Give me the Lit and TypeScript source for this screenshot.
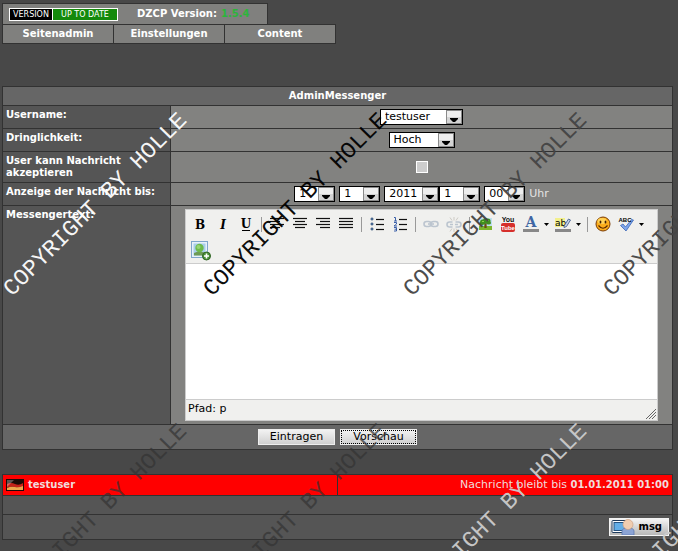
import { LitElement, html, css, svg, nothing } from "lit";
import { customElement, property } from "lit/decorators.js";

const line = (y: number, x1 = 1, x2 = 15) =>
  svg`<path d="M${x1} ${y + 0.5}H${x2}" stroke="#111" stroke-width="1.2"/>`;

const ICONS: Record<string, unknown> = {
  bold: svg`<text x="8" y="13" class="serif bold" text-anchor="middle">B</text>`,
  italic: svg`<text x="8" y="13" class="serif bold italic" text-anchor="middle">I</text>`,
  underline: svg`<text x="8" y="12" class="serif bold" text-anchor="middle">U</text><path d="M4 14.5H12" stroke="#000"/>`,
  left: svg`${line(2)}${line(5, 1, 11)}${line(8)}${line(11, 1, 11)}`,
  center: svg`${line(2)}${line(5, 3, 13)}${line(8)}${line(11, 3, 13)}`,
  right: svg`${line(2)}${line(5, 5, 15)}${line(8)}${line(11, 5, 15)}`,
  full: svg`${line(2)}${line(5)}${line(8)}${line(11)}`,
  ul: svg`${line(3, 7)}${line(8, 7)}${line(13, 7)}
    <g fill="#5b83b8" stroke="#26466f" stroke-width=".8"><circle cx="3" cy="3" r="1.1"/><circle cx="3" cy="8" r="1.1"/><circle cx="3" cy="13" r="1.1"/></g>`,
  ol: svg`${line(3, 7)}${line(8, 7)}${line(13, 7)}
    <g fill="none" stroke="#3a5fa8" stroke-width="1"><path d="M2 1.500H3.500V5M2 5H5"/><path d="M2 6.500H4.500V8L2 10H5"/><path d="M2 11.500H4.500V15H2M2.500 13.200H4.500"/></g>`,
  link: svg`<g fill="none" stroke="#bcc5cf" stroke-width="1.6"><rect x="1" y="5.5" width="7" height="5" rx="2.5"/><rect x="8" y="5.5" width="7" height="5" rx="2.5"/><path d="M5 8H11"/></g>`,
  unlink: svg`<g fill="none" stroke="#bcc5cf" stroke-width="1.6"><path d="M6.5 6H3.5a2.2 2.2 0 0 0 0 5H6.5M9.5 6h3a2.2 2.2 0 0 1 0 5h-3M4 8.5H7M9 8.5h3"/></g>
    <path d="M8 1V4.5M4 1.5L6 4.5M12 1.5L10 4.5M8 12.5V16M4 15.5L6 12.5M12 15.5L10 12.5" stroke="#cdcac4"/>`,
  image: svg`<rect x="2" y="2" width="13" height="12" fill="#bfe0f0"/><rect x="2" y="10" width="13" height="4" fill="#7db62d"/>
    <path d="M8 12L8 8 5 6M9 12L9 7 12 5" stroke="#6b4a18" stroke-width="1.3" fill="none"/>
    <path d="M3 6.5Q3 3 6 3.5 8 1 10.500 2.500 14 2.500 13.500 5.500 15 8 12 8.500 10 9 9 7 6 10 4 8.500 2 8.500 3 6.500Z" fill="#3f8f1f"/><path d="M5 5.500h2M9 4.500h3" stroke="#8fd04a"/>`,
  youtube: svg`<text x="8" y="6" class="tube" text-anchor="middle" fill="#111">You</text><rect x="1" y="7" width="14" height="9" rx="2" fill="#d62f2b"/>
    <text x="8" y="14" class="tube small" text-anchor="middle" fill="#fff">Tube</text>`,
  color: svg`<text x="8" y="11" class="serif letter" text-anchor="middle" fill="#3f66a3">A</text><rect x="0" y="13" width="16" height="3" fill="#888"/>`,
  marker: svg`<rect x="0" y="2" width="10" height="9" fill="#f3f08c"/><text x="0" y="10" class="ab">ab</text>
    <path d="M9 10L13.500 3 15.500 4 11.500 10.500 9 11.500Z" fill="#c3d2ea" stroke="#47618c" stroke-width=".9"/><rect x="0" y="13" width="16" height="3" fill="#888"/>`,
  smile: svg`<circle cx="8" cy="8" r="7" fill="#fbad1b" stroke="#7a3c05"/><ellipse cx="7" cy="5" rx="4.500" ry="3" fill="#ffd257"/>
    <ellipse cx="5.500" cy="6" rx=".9" ry="1.600" fill="#3b1d02"/><ellipse cx="10.500" cy="6" rx=".9" ry="1.600" fill="#3b1d02"/><path d="M3.500 9.500Q8 15 12.500 9.500" fill="none" stroke="#5a2a02" stroke-width="1.200"/>`,
  spell: svg`<path d="M2.500 9.500L5 8 7.500 11 13.500 3.500 15.500 4 8 15Z" fill="#7ea6ea" stroke="#3c67b5" stroke-width=".8"/><text x="7" y="6" class="tube small" text-anchor="middle">ABC</text>`,
  upload: svg`<g transform="translate(-1 -1)"><rect x=".5" y=".5" width="16" height="16" fill="#e7f1fa" stroke="#7fa5cc"/><rect x="2.500" y="2.500" width="12" height="12" fill="#a8cdea"/>
    <path d="M3 14.500V12Q8 9 14.500 12V14.500Z" fill="#6c9a55"/><circle cx="8.500" cy="7" r="4.200" fill="#6dba4b"/><circle cx="7.500" cy="6" r="2" fill="#95d574"/>
    <circle cx="15.500" cy="15" r="4" fill="#4c9139" stroke="#2f6324"/><path d="M15.500 12.500V17.500M13 15H18" stroke="#fff" stroke-width="1.600"/></g>`,
};

type Tool = { icon: string; label: string; menu?: boolean } | null;
const TOOLS: Tool[] = [
  { icon: "bold", label: "Fett" },
  { icon: "italic", label: "Kursiv" },
  { icon: "underline", label: "Unterstrichen" },
  null,
  { icon: "left", label: "Links" },
  { icon: "center", label: "Zentriert" },
  { icon: "right", label: "Rechts" },
  { icon: "full", label: "Blocksatz" },
  null,
  { icon: "ul", label: "Aufzählung" },
  { icon: "ol", label: "Nummerierung" },
  null,
  { icon: "link", label: "Link einfügen" },
  { icon: "unlink", label: "Link entfernen" },
  null,
  { icon: "image", label: "Bild" },
  { icon: "youtube", label: "YouTube" },
  { icon: "color", label: "Textfarbe", menu: true },
  { icon: "marker", label: "Hintergrundfarbe", menu: true },
  null,
  { icon: "smile", label: "Smilies" },
  { icon: "spell", label: "Rechtschreibung", menu: true },
];
const MORE_TOOLS: Tool[] = [{ icon: "upload", label: "Bild hochladen" }];

const MARKS = [
  { x: 12, y: 297, color: "#fff", opacity: 0.95 },
  { x: 212, y: 297, color: "#000", opacity: 0.95 },
  { x: 412, y: 297, color: "#444", opacity: 0.95 },
  { x: 612, y: 297, color: "#444", opacity: 0.95 },
  { x: 12, y: 608, color: "#333", opacity: 0.7 },
  { x: 212, y: 608, color: "#333", opacity: 0.7 },
  { x: 412, y: 608, color: "#ccc", opacity: 0.95 },
  { x: 612, y: 608, color: "#ccc", opacity: 0.95 },
];

@customElement("drop-down")
class DropDown extends LitElement {
  @property() label = "";
  @property() value = "";
  static styles = css`
    :host { display: inline-grid; height: 16px; }
    select, svg { grid-area: 1 / 1; }
    select {
      appearance: none; width: 100%; height: 16px; margin: 0; padding: 0 16px 0 4px;
      border: 1px solid #000; border-radius: 0; background: #fff; color: #000;
      font: 11px/14px "DejaVu Sans", sans-serif;
    }
    svg { justify-self: end; margin: 1px; pointer-events: none; }
  `;
  render() {
    return html`<select aria-label=${this.label}><option>${this.value}</option></select>
      <svg width="16" height="14" viewBox="0 0 16 14" aria-hidden="true">
        <rect x=".5" y=".5" width="15" height="13" fill="#d4d4d4" stroke="#8a8a8a" />
        <rect x="1" y="1" width="14" height="6" fill="#eee" />
        <path d="M4 8H12V9L9 12H7L4 9Z" fill="#000" />
      </svg>`;
  }
}

@customElement("text-editor")
class TextEditor extends LitElement {
  static styles = css`
    :host { display: block; border: 1px solid #ccc; background: #f0f0ee; color: #000; }
    .bar { padding: 1px 2px 0; border-bottom: 1px solid #ccc; }
    .tools { display: flex; height: 26px; }
    button { display: flex; justify-content: center; align-items: center; width: 23px; height: 26px; padding: 0; border: 0; background: none; }
    button.arrow { width: 9px; }
    .icon { overflow: visible; }
    .sep { width: 8px; display: flex; justify-content: center; align-items: center; }
    .sep::before { content: ""; width: 1px; height: 15px; background: #999; }
    .serif { font: 14px "DejaVu Serif", serif; }
    .bold { font-weight: bold; font-size: 12px; }
    .italic { font-style: italic; }
    .letter { font-size: 14px; font-weight: bold; }
    .tube { font: bold 7px "Liberation Sans", sans-serif; }
    .small { font-size: 6px; }
    .ab { font: 9px "DejaVu Sans", sans-serif; }
    textarea { display: block; box-sizing: border-box; width: 100%; height: 135px; padding: 8px; border: 0; resize: none; background: #fff; outline: 0; }
    .status { display: flex; justify-content: space-between; align-items: end; height: 20px; border-top: 1px solid #ccc; padding-left: 2px; font: 11px/18px "DejaVu Sans", sans-serif; }
    .path { align-self: start; }
  `;
  private tool(t: Tool) {
    if (!t) return html`<span class="sep"></span>`;
    return html`<button type="button" aria-label=${t.label}>
        <svg class="icon" width="16" height="16" viewBox="0 0 16 16">${ICONS[t.icon]}</svg>
      </button>${t.menu
        ? html`<button type="button" class="arrow" aria-label="${t.label} wählen">
            <svg width="5" height="3" viewBox="0 0 5 3"><path d="M0 0H5L2.500 3Z" /></svg>
          </button>`
        : nothing}`;
  }
  render() {
    return html`
      <div class="bar">
        <div class="tools">${TOOLS.map((t) => this.tool(t))}</div>
        <div class="tools">${MORE_TOOLS.map((t) => this.tool(t))}</div>
      </div>
      <textarea aria-label="Messengertext"></textarea>
      <div class="status">
        <span class="path">Pfad: p</span>
        <svg width="12" height="12" viewBox="0 0 12 12" aria-hidden="true"><path d="M1 11L11 1M4 11L11 4M7 11L11 7" stroke="#666" /></svg>
      </div>`;
  }
}

@customElement("app-root")
class AppRoot extends LitElement {
  static styles = css`
    :host {
      display: block; position: relative; box-sizing: border-box; min-height: 100vh; overflow: hidden;
      padding: 3px 5px 11px 2px; background: #484848; color: #fff;
      font: 11px/12px "DejaVu Sans", Verdana, sans-serif;
    }
    b, h1, .head, nav, .name { font-size: 10px; font-weight: bold; }
    .head { display: flex; align-items: center; box-sizing: border-box; width: 266px; height: 21px; padding-left: 6px; border: 1px solid #323232; border-bottom: 0; background: #80807e; }
    .badge { display: flex; margin-right: 19px; border: 1px solid #fff; font: 8px/11px "DejaVu Sans", sans-serif; text-align: center; }
    .dark { width: 42px; background: #000; }
    .green { width: 64px; border-left: 1px solid #fff; background: #148a0c; }
    .number { margin-left: 4px; color: #2cb53a; }
    nav { display: grid; grid-template-columns: repeat(3, 110px); gap: 1px; width: max-content; border: 1px solid #323232; background: #323232; }
    nav a { height: 18px; line-height: 18px; background: #80807e; color: #fff; text-align: center; text-decoration: none; }
    .grid { display: grid; gap: 1px; border: 1px solid #323232; background: #323232; }
    form { grid-template-columns: 25fr 75fr; margin-top: 42px; }
    h1 { grid-column: 1 / -1; margin: 0; background: #666; line-height: 18px; text-align: center; }
    .name { padding: 3px; background: #555; }
    .field { display: flex; justify-content: center; align-items: center; min-height: 22px; background: #828280; color: #e4e4e4; }
    .dates { gap: 4px; }
    .pair { display: flex; }
    .wide { width: 83px; }
    .mid { width: 66px; }
    .year { width: 55px; }
    .short { width: 41px; }
    .tick { appearance: none; width: 12px; height: 12px; margin: 0; border: 1px solid #fff; background: #ccc; }
    .tick:checked { background: #333; }
    .text { padding: 3px 0; }
    text-editor { width: 94%; }
    .actions { grid-column: 1 / -1; display: flex; justify-content: center; align-items: center; gap: 5px; height: 24px; background: #666; }
    .push { min-width: 77px; height: 16px; padding: 0 9px; border: 1px solid #eee; background: linear-gradient(#f2f2f2, #d0d0d0); color: #000; font: 11px/14px "DejaVu Sans", sans-serif; }
    .focused { outline: 1px dotted #000; outline-offset: -2px; }
    .note { grid-template-columns: 1fr 1fr; margin-top: 24px; }
    .red { display: flex; align-items: center; gap: 4px; height: 20px; padding: 0 3px; background: #f00; color: #f0dcdc; }
    .end { justify-content: end; }
    .body { grid-column: 1 / -1; height: 18px; background: #555; }
    .foot { grid-column: 1 / -1; display: flex; justify-content: end; align-items: center; height: 24px; padding-right: 3px; background: #555; }
    .msg { display: flex; align-items: center; gap: 3px; height: 18px; padding: 0 6px 0 1px; border: 1px solid #f4f4f4; background: linear-gradient(#f4f4f4, #b8b8b8); color: #000; font: bold 10px/16px "DejaVu Sans", sans-serif; }
    .marks { position: absolute; inset: 0; width: 100%; height: 100%; pointer-events: none; }
    .marks text { font: 23px "Liberation Mono", monospace; }
  `;
  render() {
    return html`
      <header>
        <div class="head">
          <span class="badge"><span class="dark">VERSION</span><span class="green">UP TO DATE</span></span>
          DZCP Version: <span class="number">1.5.4</span>
        </div>
        <nav><a href="#">Seitenadmin</a><a href="#">Einstellungen</a><a href="#">Content</a></nav>
      </header>
      <form class="grid">
        <h1>AdminMessenger</h1>
        <div class="name">Username:</div>
        <div class="field"><drop-down class="wide" label="Username" value="testuser"></drop-down></div>
        <div class="name">Dringlichkeit:</div>
        <div class="field"><drop-down class="mid" label="Dringlichkeit" value="Hoch"></drop-down></div>
        <label class="name" for="accept">User kann Nachricht<br />akzeptieren</label>
        <div class="field"><input class="tick" id="accept" type="checkbox" /></div>
        <div class="name">Anzeige der Nachricht bis:</div>
        <div class="field dates">
          <drop-down class="short" label="Tag" value="1"></drop-down>
          <drop-down class="short" label="Monat" value="1"></drop-down>
          <span class="pair">
            <drop-down class="year" label="Jahr" value="2011"></drop-down>
            <drop-down class="short" label="Stunde" value="1"></drop-down>
          </span>
          <drop-down class="short" label="Minute" value="00"></drop-down>
          <span>Uhr</span>
        </div>
        <div class="name">Messengertext:</div>
        <div class="field text"><text-editor></text-editor></div>
        <div class="actions">
          <button class="push" type="button">Eintragen</button>
          <button class="push focused" type="button">Vorschau</button>
        </div>
      </form>
      <section class="grid note">
        <div class="red">
          <svg width="18" height="12" viewBox="0 0 18 12" aria-hidden="true">
            <rect width="18" height="12" fill="#1c0a06" /><path d="M1 5Q5 3 9 5T17 4V8Q13 9 9 8T1 9Z" fill="#c4231a" />
            <path d="M1 9Q5 7 9 8T17 7V11H1Z" fill="#eda64c" /><path d="M1 1H8L1 8Z" fill="#fff" opacity=".3" />
          </svg>
          <b>testuser</b>
        </div>
        <div class="red end"><span>Nachricht bleibt bis <b>01.01.2011 01:00</b></span></div>
        <div class="body"></div>
        <div class="foot">
          <button class="msg" type="button">
            <svg width="24" height="16" viewBox="0 0 24 16" aria-hidden="true">
              <rect x="1" y="1.500" width="15" height="12" rx="1" fill="#fff" stroke="#1d3a5c" /><rect x="3" y="3.500" width="11" height="8" fill="#62aee8" stroke="#24507e" />
              <path d="M11 16V12Q11 9 17 9T23 12V16Z" fill="#8ba3d4" stroke="#5d78b0" stroke-width=".8" /><circle cx="17" cy="5.500" r="5" fill="#f0cdb0" stroke="#c99a78" stroke-width=".6" />
            </svg>
            msg
          </button>
        </div>
      </section>
      <svg class="marks" aria-hidden="true">
        ${MARKS.map((m) => svg`<text transform="translate(${m.x} ${m.y}) rotate(-45)" fill=${m.color} opacity=${m.opacity}>COPYRIGHT BY HOLLE</text>`)}
      </svg>`;
  }
}
